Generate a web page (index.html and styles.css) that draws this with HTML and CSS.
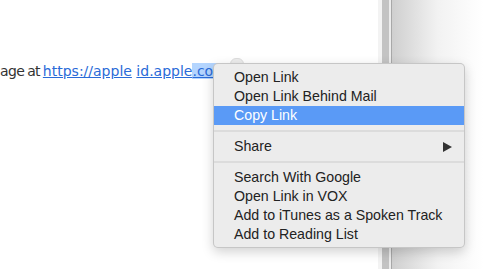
FILE: index.html
```html
<!DOCTYPE html>
<html lang="en">
<head>
  <meta charset="UTF-8">
  <title>Context Menu</title>
  <link rel="stylesheet" href="styles.css">
</head>
<body>
  <div class="page">
    <p class="line"><span class="lead">age at </span><a href="#">https://apple</a> <a href="#">id.apple<span class="sel">.com</span></a><span class="bubble"></span></p>
  </div>

  <div class="chrome">
    <div class="edge"></div>
    <div class="thumb"></div>
    <div class="gap"></div>
    <div class="shade"></div>
  </div>

  <div class="menu">
    <div class="item">Open Link</div>
    <div class="item">Open Link Behind Mail</div>
    <div class="item active">Copy Link</div>
    <div class="sep"></div>
    <div class="item">Share <span class="arrow"></span></div>
    <div class="sep"></div>
    <div class="item">Search With Google</div>
    <div class="item">Open Link in VOX</div>
    <div class="item">Add to iTunes as a Spoken Track</div>
    <div class="item">Add to Reading List</div>
  </div>
</body>
</html>
```

FILE: styles.css
```css
* { margin: 0; padding: 0; box-sizing: border-box; }
html, body {
  width: 483px;
  height: 269px;
  overflow: hidden;
  background: #fff;
}
body {
  display: flex;
  position: relative;
}
.page {
  flex: 1;
  padding-top: 58px;
  overflow: hidden;
}
.line {
  font-family: "DejaVu Sans", sans-serif;
  font-size: 14px;
  line-height: 18px;
  color: #333;
  white-space: nowrap;
}
.lead {
  letter-spacing: -0.6px;
  word-spacing: -1px;
}
.line a {
  color: #2a6bd8;
  text-decoration: underline;
}
.sel {
  background: #b4d5fe;
}
.bubble {
  display: inline-block;
  width: 14px;
  height: 12px;
  margin-left: 3px;
  border-radius: 6px;
  background: #ececec;
  border: 1px solid #ddd;
  vertical-align: 6px;
}
.chrome {
  width: 105px;
  display: flex;
}
.edge { width: 4px; background: #f3f3f3; }
.thumb { width: 7px; background: #c3c3c3; }
.gap { width: 3px; background: #ececec; border-right: 1px solid #a8a8a8; }
.shade {
  flex: 1;
  background: linear-gradient(to right, #cfcfcf, #f2f2f2 50%, #fff);
}
.menu {
  position: absolute;
  left: 213px;
  top: 63px;
  width: 252px;
  padding: 4px 0 3px;
  background: #ececec;
  border: 1px solid rgba(0, 0, 0, 0.16);
  border-radius: 5px;
  box-shadow: 0 4px 12px rgba(0, 0, 0, 0.18);
  font-family: "Liberation Sans", Arial, sans-serif;
  font-size: 14.2px;
  color: #222;
}
.item {
  height: 19px;
  line-height: 19px;
  padding-left: 20px;
  display: flex;
  justify-content: space-between;
  align-items: center;
}
.item.active {
  background: #5a9af6;
  color: #fff;
}
.sep {
  height: 12px;
  display: flex;
  align-items: center;
}
.sep::after {
  content: "";
  flex: 1;
  height: 2px;
  background: #dcdcdc;
}
.arrow {
  width: 0;
  height: 0;
  margin-right: 12px;
  border-top: 5px solid transparent;
  border-bottom: 5px solid transparent;
  border-left: 9px solid #333;
}
```
